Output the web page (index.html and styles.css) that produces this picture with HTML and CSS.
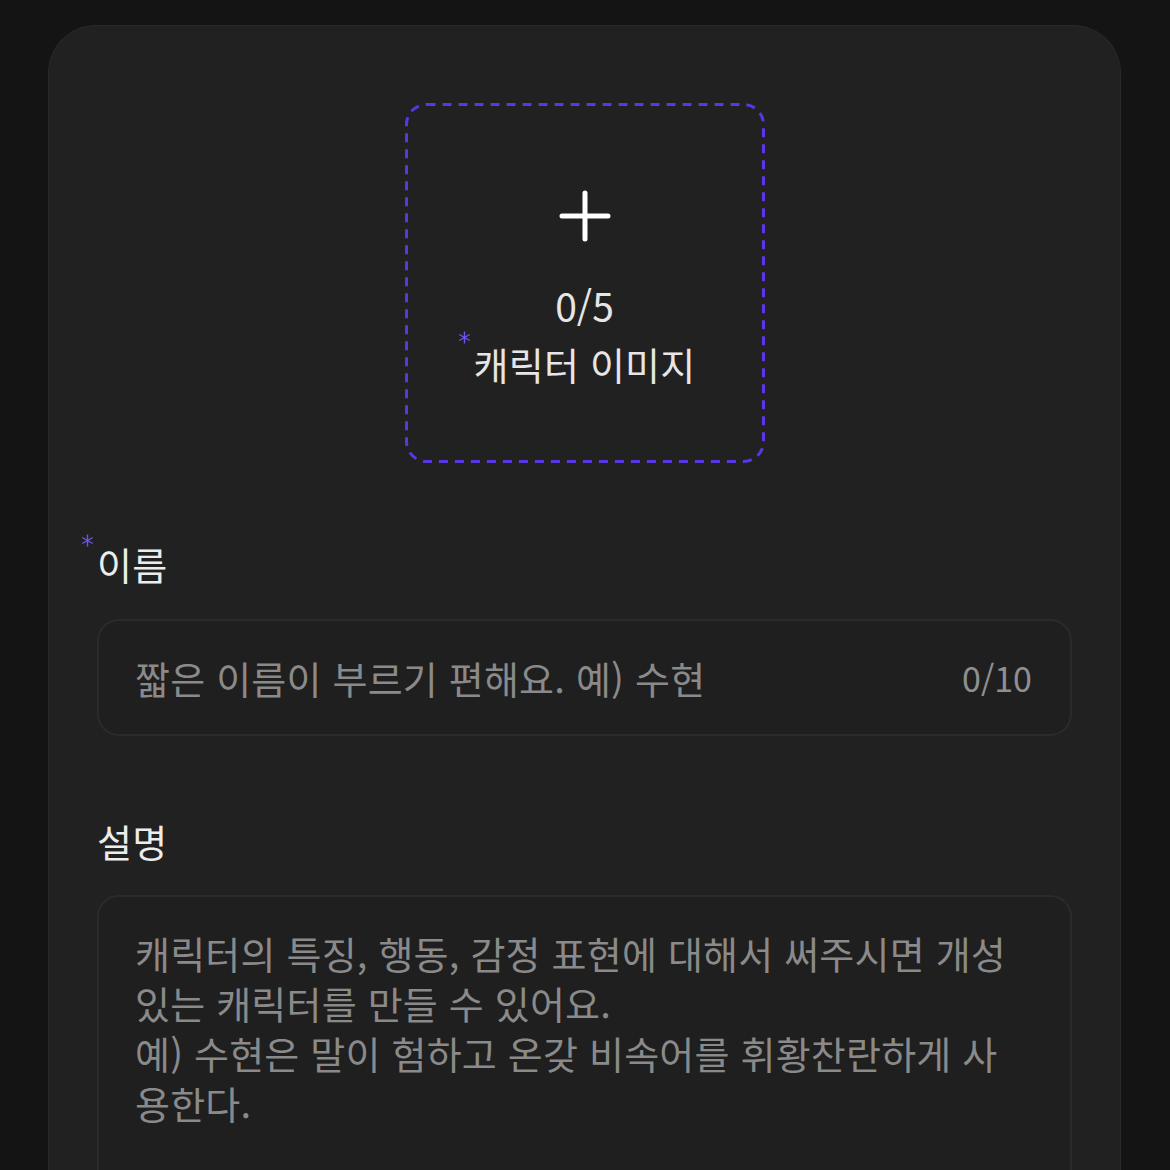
FILE: index.html
```html
<!DOCTYPE html>
<html lang="ko">
<head>
<meta charset="utf-8">
<title>캐릭터 만들기</title>
<link rel="stylesheet" href="styles.css">
</head>
<body>
<main class="card">
  <div class="upload">
    <svg class="upload-border" width="360" height="360" viewBox="0 0 360 360" aria-hidden="true">
      <rect x="1.5" y="1.5" width="357" height="357" rx="20" ry="20" fill="none" stroke="#5b36e6" stroke-width="3" stroke-dasharray="9 7"/>
    </svg>
    <svg class="plus" width="52" height="52" viewBox="0 0 52 52" aria-hidden="true">
      <path d="M26 3 V49 M3 26 H49" stroke="#ffffff" stroke-width="5" stroke-linecap="round" fill="none"/>
    </svg>
    <div class="upload-count">0/5</div>
    <div class="upload-label"><svg class="req req-upload" width="13" height="13" viewBox="0 0 13 13" aria-hidden="true"><path d="M6.5 0.5 V12.5 M1.3 3.5 L11.7 9.5 M1.3 9.5 L11.7 3.5" stroke="#6a55f0" stroke-width="1.4" fill="none"/></svg>캐릭터 이미지</div>
  </div>

  <div class="field-label label-name"><svg class="req req-out" width="13" height="13" viewBox="0 0 13 13" aria-hidden="true"><path d="M6.5 0.5 V12.5 M1.3 3.5 L11.7 9.5 M1.3 9.5 L11.7 3.5" stroke="#6a55f0" stroke-width="1.4" fill="none"/></svg>이름</div>
  <div class="input">
    <span class="placeholder">짧은 이름이 부르기 편해요. 예) 수현</span>
    <span class="counter">0/10</span>
  </div>

  <div class="field-label label-desc">설명</div>
  <div class="textarea">
    <p class="placeholder">캐릭터의 특징, 행동, 감정 표현에 대해서 써주시면 개성<br>있는 캐릭터를 만들 수 있어요.<br>예) 수현은 말이 험하고 온갖 비속어를 휘황찬란하게 사<br>용한다.</p>
  </div>
</main>
</body>
</html>
```

FILE: styles.css
```css
html, body {
  margin: 0;
  padding: 0;
  background: #141414;
  overflow: hidden;
}

body {
  font-family: "Noto Sans CJK KR", "Noto Sans", sans-serif;
  color: #e8e8e8;
}

.card {
  box-sizing: border-box;
  width: 1073px;
  margin: 25px 0 0 48px;
  min-height: 1300px;
  background: #212121;
  border: 1px solid #292929;
  border-bottom: none;
  border-radius: 48px 48px 0 0;
  padding: 77px 48px 0 48px;
  display: flex;
  flex-direction: column;
}

.upload {
  position: relative;
  box-sizing: border-box;
  width: 360px;
  height: 360px;
  margin: 0 auto;
  padding-top: 87px;
  display: flex;
  flex-direction: column;
  align-items: center;
}

.upload-border {
  position: absolute;
  left: 0;
  top: 0;
}

.plus {
  display: block;
}

.upload-count {
  margin-top: 38px;
  font-size: 39px;
  line-height: 50px;
  color: #e6e6e6;
}

.upload-label {
  margin-top: 9px;
  font-size: 38px;
  letter-spacing: 0.2px;
  line-height: 50px;
  color: #e6e6e6;
  margin-left: -16px;
}

.req {
  display: inline-block;
  vertical-align: baseline;
  position: relative;
  margin-right: 3px;
}

.req-upload {
  top: -36px;
}

.req-out {
  margin-left: -16px;
  top: -33px;
}

.field-label {
  font-size: 38px;
  letter-spacing: 0.2px;
  line-height: 50px;
  color: #ececec;
}

.label-name {
  margin-top: 76px;
}

.label-desc {
  margin-top: 80px;
}

.input {
  box-sizing: border-box;
  margin-top: 30px;
  height: 117px;
  border: 2px solid #2b2b2b;
  border-radius: 22px;
  background: #1f1f1f;
  padding: 0 38px 0 36px;
  display: flex;
  align-items: center;
  justify-content: space-between;
}

.placeholder {
  font-size: 38px;
  letter-spacing: 0.2px;
  line-height: 50px;
  color: #8a8a8a;
}

.counter {
  font-size: 34px;
  line-height: 50px;
  color: #8f8f8f;
}

.textarea {
  box-sizing: border-box;
  margin-top: 29px;
  height: 400px;
  border: 2px solid #2b2b2b;
  border-radius: 22px;
  background: #1f1f1f;
  padding: 31px 36px;
}

.textarea .placeholder {
  margin: 0;
  white-space: nowrap;
}
```
